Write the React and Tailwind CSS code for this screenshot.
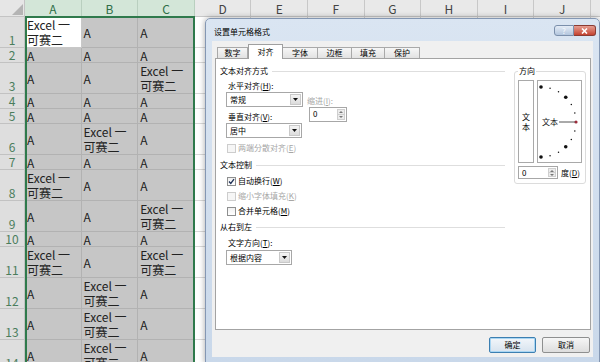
import React from 'react';

const ROWS = [
  { n: 1, tall: true, cells: ['E', 'A', 'A'] },
  { n: 2, tall: false, cells: ['A', 'A', 'A'] },
  { n: 3, tall: true, cells: ['A', 'A', 'E'] },
  { n: 4, tall: false, cells: ['A', 'A', 'A'] },
  { n: 5, tall: false, cells: ['A', 'A', 'A'] },
  { n: 6, tall: true, cells: ['A', 'E', 'A'] },
  { n: 7, tall: false, cells: ['A', 'A', 'A'] },
  { n: 8, tall: true, cells: ['E', 'A', 'A'] },
  { n: 9, tall: true, cells: ['A', 'A', 'E'] },
  { n: 10, tall: false, cells: ['A', 'A', 'A'] },
  { n: 11, tall: true, cells: ['E', 'A', 'E'] },
  { n: 12, tall: true, cells: ['A', 'E', 'A'] },
  { n: 13, tall: true, cells: ['A', 'E', 'A'] },
  { n: 14, tall: true, cells: ['A', 'E', 'A'] },
];

const COLS = ['A', 'B', 'C', 'D', 'E', 'F', 'G', 'H', 'I', 'J'];

const TABS = [
  { label: '数字', w: 'w-[31px]' },
  { label: '对齐', w: 'w-[35px]', active: true },
  { label: '字体', w: 'w-[35px]' },
  { label: '边框', w: 'w-[34px]' },
  { label: '填充', w: 'w-[33px]' },
  { label: '保护', w: 'w-[35px]' },
];

function Cell({ v, active }) {
  return (
    <div
      className={`flex w-[56.6px] shrink-0 items-center border-r border-b pl-[2px] ${
        active ? 'border-[#c8c8c8] bg-white' : 'border-[#b2b2b2] bg-[#c6c6c6]'
      }`}
    >
      {v === 'E' ? (
        <div className="leading-[15px]">
          Excel 一
          <br />
          可赛二
        </div>
      ) : (
        <span className="leading-[13px]">A</span>
      )}
    </div>
  );
}

function Sheet() {
  return (
    <div className="flex flex-col text-[12px] text-[#222]">
      {/* column headers */}
      <div className="flex h-[17px]">
        <div className="flex w-[25px] shrink-0 items-end justify-end border-r border-b border-[#c4c4c4] bg-[#e6e6e6] pr-[1px] pb-[1px]">
          <svg width="11" height="11" viewBox="0 0 11 11">
            <path d="M11 0 L11 11 L0 11 Z" fill="#b4b4b4" />
          </svg>
        </div>
        {COLS.map((c, i) => (
          <div
            key={c}
            className={`flex w-[56.6px] shrink-0 justify-center border-r border-b pt-[2px] leading-[13px] ${
              i < 3
                ? 'border-[#b9cfbf] bg-[#d3e6d8] text-[#2f6e47]'
                : 'border-[#c8c8c8] bg-[#e9e9e9] text-[#444]'
            }`}
          >
            {c}
          </div>
        ))}
        <div className="flex-1 border-b border-[#c8c8c8] bg-[#e9e9e9]" />
      </div>
      {ROWS.map((r) => (
        <div key={r.n} className={`flex ${r.tall ? 'h-[31px]' : 'h-[15px]'}`}>
          <div className="flex w-[25px] shrink-0 items-end justify-center border-r border-b border-[#c2c2c2] bg-[#dedede] pb-[1px] leading-[12px] text-[#4a7d5c]">
            {r.n}
          </div>
          {r.cells.map((v, i) => (
            <Cell key={i} v={v} active={r.n === 1 && i === 0} />
          ))}
          {COLS.slice(3).map((c) => (
            <div key={c} className="w-[56.6px] shrink-0 border-r border-b border-[#d9d9d9] bg-white" />
          ))}
          <div className="flex-1 border-b border-[#d9d9d9]" />
        </div>
      ))}
    </div>
  );
}

function Select({ value, w }) {
  return (
    <div className={`flex h-[15px] ${w} border border-[#a7a7a7] bg-white`}>
      <span className="flex-1 pl-[3px] leading-[13px]">{value}</span>
      <span className="m-[1px] flex w-[11px] items-center justify-center border border-[#c9c9c9] bg-linear-to-b from-[#f4f4f4] to-[#dcdcdc]">
        <svg width="5" height="3" viewBox="0 0 5 3">
          <path d="M0 0 L5 0 L2.5 3 Z" fill="#111" />
        </svg>
      </span>
    </div>
  );
}

function Spin({ w, h }) {
  return (
    <div className={`flex ${h} ${w} border border-[#a7a7a7] bg-white`}>
      <span className="flex-1 pl-[3px] leading-[12px]">0</span>
      <div className="m-[1px] flex w-[8px] flex-col border border-[#cfcfcf] bg-[#ececec]">
        <div className="flex flex-1 items-center justify-center border-b border-[#cfcfcf]">
          <svg width="4" height="2" viewBox="0 0 4 2">
            <path d="M0 2 L4 2 L2 0 Z" fill="#777" />
          </svg>
        </div>
        <div className="flex flex-1 items-center justify-center">
          <svg width="4" height="2" viewBox="0 0 4 2">
            <path d="M0 0 L4 0 L2 2 Z" fill="#777" />
          </svg>
        </div>
      </div>
    </div>
  );
}

function Check({ checked, disabled, children, mt }) {
  return (
    <div className={`ml-[7px] flex h-[10px] items-center gap-[2px] ${mt}`}>
      <span
        className={`flex h-[9px] w-[9px] items-center justify-center border ${
          disabled ? 'border-[#cdcdcd] bg-[#f6f6f6]' : 'border-[#8e8f8f] bg-linear-to-b from-[#f0f0f0] to-white'
        }`}
      >
        {checked && (
          <svg width="7" height="7" viewBox="0 0 7 7">
            <path d="M1 3.5 L2.8 5.5 L6 1.2" stroke="#1c2f55" strokeWidth="1.3" fill="none" />
          </svg>
        )}
      </span>
      <span className={`leading-[10px] ${disabled ? 'text-[#a6a6a6]' : 'text-black'}`}>{children}</span>
    </div>
  );
}

function Section({ title, mt }) {
  return (
    <div className={`flex h-[10px] items-center gap-[4px] ${mt}`}>
      <span className="leading-[10px]">{title}</span>
      <div className="h-px flex-1 bg-[#dedede]" />
    </div>
  );
}

function Dial() {
  const dots = [];
  for (let i = 0; i <= 12; i++) {
    const a = ((90 - i * 15) * Math.PI) / 180;
    const x = 3 + 35 * Math.cos(a);
    const y = 41 - 35 * Math.sin(a);
    const big = i % 3 === 0 && i !== 6;
    dots.push(
      <circle
        key={i}
        cx={x}
        cy={y}
        r={i === 6 ? 1.6 : big ? 1.8 : 0.75}
        fill={i === 6 ? '#9c2b3a' : '#111'}
      />
    );
  }
  return (
    <div className="h-[83px] w-[45px] border border-[#a9a9a9] bg-white">
      <svg width="43" height="81" viewBox="0 0 43 81">
        {dots}
        <line x1="21" y1="41" x2="37" y2="41" stroke="#555" strokeWidth="1" />
        <text x="4" y="44" fontSize="8" fill="#111" fontFamily="Noto Sans CJK SC, sans-serif">
          文本
        </text>
      </svg>
    </div>
  );
}

function Dialog() {
  return (
    <div className="absolute left-[205px] top-[18px] flex h-[346px] w-[395px] flex-col rounded-t-[5px] border border-[#8497b3] bg-linear-to-b from-[#dae5f2] to-[#c9d8ea] text-[8px] text-black shadow-[0_0_6px_rgba(0,0,0,0.35)]">
      {/* title bar */}
      <div className="flex h-[22px] shrink-0 items-start pl-[8px] pr-[3px]">
        <span className="mt-[8px] leading-[10px]">设置单元格格式</span>
        <div className="ml-auto mt-[6px] flex">
          <div className="flex h-[11px] w-[20px] items-center justify-center rounded-l-[3px] border border-[#7b8fab] bg-linear-to-b from-[#e4ecf6] to-[#b3c6de] leading-[9px] text-[#f7f9fc]">
            ?
          </div>
          <div className="flex h-[11px] w-[22px] items-center justify-center rounded-r-[3px] border border-l-0 border-[#8a3b33] bg-linear-to-b from-[#e59d92] to-[#c3412f]">
            <svg width="7" height="6" viewBox="0 0 7 6">
              <path d="M1 0.5 L6 5.5 M6 0.5 L1 5.5" stroke="#fff" strokeWidth="1.6" />
            </svg>
          </div>
        </div>
      </div>

      {/* client area */}
      <div className="mx-[6px] flex h-[316px] shrink-0 flex-col bg-[#f0f0f0] pl-[3px] pr-[2px] pt-[3px]">
        <div className="flex h-[14px] items-end pl-[2px]">
          {TABS.map((t) =>
            t.active ? (
              <div
                key={t.label}
                className={`relative z-10 -mb-px flex h-[15px] ${t.w} justify-center border border-b-0 border-[#9f9f9f] bg-white pt-[2px] leading-[10px]`}
              >
                {t.label}
              </div>
            ) : (
              <div
                key={t.label}
                className={`flex h-[11px] ${t.w} items-center justify-center border border-b-0 border-l-0 border-[#a9a9a9] bg-linear-to-b from-[#f6f6f6] to-[#e2e2e2] leading-[10px] first:border-l`}
              >
                {t.label}
              </div>
            )
          )}
        </div>

        {/* tab panel */}
        <div className="flex h-[272px] shrink-0 border border-[#a3a3a3] bg-white">
          <div className="flex w-[289px] flex-col pl-[4px] pt-[7px]">
            <Section title="文本对齐方式" mt="mt-0" />
            <div className="flex">
              <div className="ml-[6px] flex w-[77px] flex-col">
                <span className="mt-[5px] h-[10px] pl-[2px] leading-[10px]">
                  水平对齐(<u>H</u>):
                </span>
                <div className="mt-[1px]">
                  <Select value="常规" w="w-[77px]" />
                </div>
                <span className="mt-[5px] h-[10px] pl-[2px] leading-[10px]">
                  垂直对齐(<u>V</u>):
                </span>
                <div className="mt-[1px]">
                  <Select value="居中" w="w-[76px]" />
                </div>
              </div>
              <div className="ml-[4px] flex flex-col pt-[20px]">
                <span className="h-[10px] leading-[10px] text-[#a6a6a6]">
                  缩进(<u>I</u>):
                </span>
                <div className="ml-[2px] mt-[1px]">
                  <Spin w="w-[38px]" h="h-[15px]" />
                </div>
              </div>
            </div>
            <Check disabled mt="mt-[5px]">
              两端分散对齐(<u>E</u>)
            </Check>
            <Section title="文本控制" mt="mt-[7px]" />
            <Check checked mt="mt-[6px]">
              自动换行(<u>W</u>)
            </Check>
            <Check disabled mt="mt-[5px]">
              缩小字体填充(<u>K</u>)
            </Check>
            <Check mt="mt-[5px]">
              合并单元格(<u>M</u>)
            </Check>
            <Section title="从右到左" mt="mt-[6px]" />
            <span className="mt-[6px] h-[10px] pl-[8px] leading-[10px]">
              文字方向(<u>T</u>):
            </span>
            <div className="ml-[6px] mt-[2px]">
              <Select value="根据内容" w="w-[66px]" />
            </div>
          </div>

          {/* orientation */}
          <fieldset className="ml-[9px] mt-[7px] h-[118px] w-[72px] rounded-[3px] border border-[#dcdcdc] px-[3px] pb-[4px] pt-[4px]">
            <legend className="px-[1px] leading-[10px]">方向</legend>
            <div className="flex gap-[3px]">
              <div className="flex h-[83px] w-[16px] flex-col items-center justify-center border border-[#a9a9a9] bg-white leading-[10px]">
                <span>文</span>
                <span>本</span>
              </div>
              <Dial />
            </div>
            <div className="mt-[3px] flex items-center">
              <Spin w="w-[40px]" h="h-[13px]" />
              <span className="ml-[3px] leading-[10px]">
                度(<u>D</u>)
              </span>
            </div>
          </fieldset>
        </div>

        {/* buttons */}
        <div className="mr-[1px] mt-[7px] flex justify-end gap-[6px]">
          <div className="flex h-[16px] w-[47px] items-center justify-center rounded-[2px] border border-[#3c7fb1] bg-linear-to-b from-[#f2f6fa] to-[#d7e3ee] shadow-[inset_0_0_0_1px_#a9d6f3]">
            确定
          </div>
          <div className="flex h-[16px] w-[48px] items-center justify-center rounded-[2px] border border-[#8e8f8f] bg-linear-to-b from-[#f6f6f6] to-[#dddddd]">
            取消
          </div>
        </div>
      </div>
    </div>
  );
}

export default function App() {
  return (
    <div className="relative h-[362px] w-[600px] overflow-hidden bg-white font-['Noto_Sans_CJK_SC','Noto_Sans',sans-serif]">
      <Sheet />
      {/* selection outline */}
      <div className="absolute left-[25px] top-[16px] h-[360px] w-[170px] border-2 border-[#2f7a4c]" />
      <Dialog />
    </div>
  );
}
